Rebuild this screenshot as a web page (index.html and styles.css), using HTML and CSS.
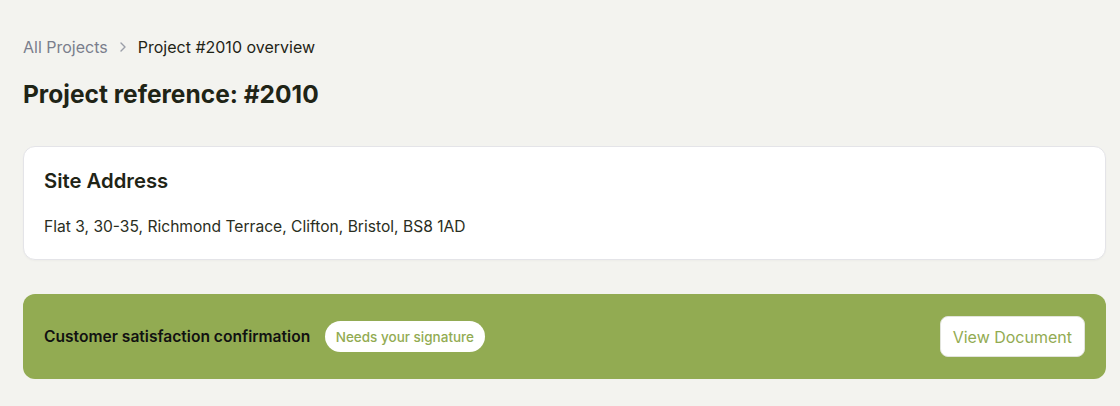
FILE: index.html
```html
<!DOCTYPE html>
<html lang="en">
<head>
<meta charset="utf-8">
<title>Project #2010 overview</title>
<link rel="stylesheet" href="styles.css">
</head>
<body>
<main class="page">
  <nav class="breadcrumb">
    <a class="crumb-link" href="#">All Projects</a>
    <svg class="crumb-sep" width="8" height="12" viewBox="0 0 8 12" aria-hidden="true"><path d="M2 2l4 4-4 4" fill="none" stroke="#9a9ea8" stroke-width="1.4" stroke-linecap="round" stroke-linejoin="round"/></svg>
    <span class="crumb-current">Project #2010 overview</span>
  </nav>
  <h1 class="page-title">Project reference: #2010</h1>
  <section class="card">
    <h2 class="card-title">Site Address</h2>
    <p class="card-text">Flat 3, 30-35, Richmond Terrace, Clifton, Bristol, BS8 1AD</p>
  </section>
  <section class="banner">
    <div class="banner-left">
      <span class="banner-title">Customer satisfaction confirmation</span>
      <span class="pill">Needs your signature</span>
    </div>
    <button class="btn" type="button">View Document</button>
  </section>
</main>
</body>
</html>
```
FILE: styles.css
```css
* { box-sizing: border-box; }
html, body { margin: 0; padding: 0; }
body {
  background: #f3f3ef;
  font-family: Inter, "Noto Sans", "Liberation Sans", sans-serif;
  color: #1f2416;
}
.page {
  padding: 37px 14px 0 23px;
}
.breadcrumb {
  display: flex;
  align-items: center;
  gap: 11px;
  height: 20px;
  font-size: 16px;
  line-height: 20px;
}
.crumb-link {
  color: #7a7e8c;
  text-decoration: none;
}
.crumb-sep { display: block; }
.crumb-current { color: #1f2416; }
.page-title {
  margin: 21px 0 0;
  font-size: 24.5px;
  line-height: 32px;
  font-weight: 700;
  color: #1f2416;
}
.card {
  margin-top: 36px;
  background: #fff;
  border: 1px solid #e4e4e8;
  border-radius: 12px;
  padding: 20px 20px 20px;
  box-shadow: 0 1px 2px rgba(0,0,0,0.03);
}
.card-title {
  margin: 0;
  font-size: 20.3px;
  line-height: 28px;
  font-weight: 600;
  color: #1f2416;
}
.card-text {
  margin: 20px 0 0;
  font-size: 15.6px;
  line-height: 24px;
  color: #2a2e22;
}
.banner {
  margin-top: 34px;
  background: #92ab52;
  border-radius: 12px;
  padding: 22px 21px;
  display: flex;
  align-items: center;
  justify-content: space-between;
}
.banner-left {
  display: flex;
  align-items: center;
  gap: 15px;
}
.banner-title {
  font-size: 15.6px;
  font-weight: 600;
  color: #111;
}
.pill {
  background: #fff;
  color: #92ab52;
  font-size: 13.5px;
  line-height: 20px;
  padding: 5.5px 10.5px;
  border-radius: 999px;
  font-weight: 500;
}
.btn {
  background: #fff;
  border: 1px solid #e2e4dc;
  border-radius: 8px;
  height: 41px;
  padding: 0 12px;
  font-family: inherit;
  font-size: 16px;
  color: #92ab52;
  font-weight: 400;
}
```
